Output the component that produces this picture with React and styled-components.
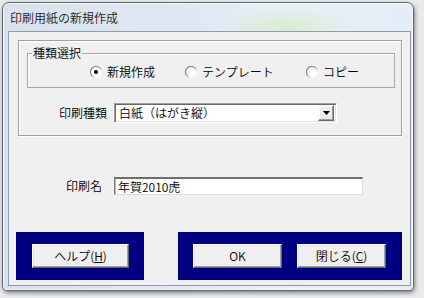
import React, { useId } from 'react';
import styled, { createGlobalStyle } from 'styled-components';

const Global = createGlobalStyle`
  html, body { margin: 0; padding: 0; }
  body {
    background: #e9eaec;
    width: 424px;
    height: 298px;
    overflow: hidden;
    font-family: "Noto Sans CJK JP", "Noto Sans", sans-serif;
    font-size: 12px;
    font-weight: 350;
    color: #000;
  }
`;

const Desktop = styled.div`
  width: 424px;
  height: 298px;
  box-sizing: border-box;
  padding: 2px 0 0 2px;
`;

const Window = styled.div`
  width: 412px;
  height: 289px;
  box-sizing: border-box;
  border: 1px solid #5d6670;
  border-radius: 7px 7px 5px 5px;
  padding: 0 2px 4px 5px;
  display: flex;
  flex-direction: column;
  background:
    radial-gradient(ellipse 70px 22px at 285px 26px, rgba(214, 236, 200, 0.9), rgba(214, 236, 200, 0) 100%),
    linear-gradient(to right, #d8e2ee 0%, #dfe8f2 45%, #e7eff8 70%, #e4edf7 100%);
  box-shadow: inset 0 0 0 1px rgba(255, 255, 255, 0.75), 1px 2px 4px rgba(0, 0, 0, 0.45);
`;

const TitleBar = styled.div`
  height: 28px;
  display: flex;
  align-items: center;
  padding-left: 2px;
  font-size: 12px;
  color: #1a1a1a;
`;

const Client = styled.div`
  flex: 1;
  box-sizing: border-box;
  border: 1px solid #8f9caa;
  background: #f0f0f0;
  padding: 8px 8px 5px 7px;
  display: flex;
  flex-direction: column;
`;

const Panel = styled.div`
  margin-left: 2px;
  width: 384px;
  height: 96px;
  box-sizing: border-box;
  border: 1px solid #a0a0a0;
  box-shadow: inset 1px 1px 0 #fff, 1px 1px 0 #fff;
  padding: 5px 6px 12px 8px;
  display: flex;
  flex-direction: column;
`;

const GroupBox = styled.fieldset`
  margin: 0;
  min-width: 0;
  width: 368px;
  box-sizing: border-box;
  border: 1px solid #a8a8a8;
  box-shadow: inset 1px 1px 0 #fff;
  padding: 4px 0 7px 0;
`;

const Legend = styled.legend`
  margin-left: 4px;
  padding: 0 1px;
  line-height: 14px;
  font-size: 12px;
`;

const RadioRow = styled.div`
  display: flex;
  align-items: center;
  height: 16px;
  padding-left: 62px;
`;

const RadioItem = styled.label`
  display: flex;
  align-items: center;
  gap: 5px;
  width: ${p => p.$w}px;
  line-height: 16px;
  white-space: nowrap;
`;

const FieldRow = styled.div`
  display: flex;
  align-items: center;
  margin-top: ${p => p.$mt}px;
`;

const FieldLabel = styled.div`
  width: ${p => p.$w}px;
  margin-right: ${p => p.$gap}px;
  text-align: right;
  line-height: 16px;
  white-space: nowrap;
`;

const Combo = styled.div`
  width: 223px;
  height: 20px;
  box-sizing: border-box;
  border-top: 1px solid #a0a0a0;
  border-left: 1px solid #a0a0a0;
  border-right: 1px solid #fff;
  border-bottom: 1px solid #fff;
  box-shadow: inset 1px 1px 0 #696969, inset -1px -1px 0 #e3e3e3;
  background: #fff;
  display: flex;
  align-items: center;
  padding: 1px 2px 1px 1px;
`;

const ComboText = styled.div`
  flex: 1;
  padding-left: 3px;
  line-height: 16px;
  white-space: nowrap;
`;

const DropButton = styled.div`
  width: 16px;
  height: 16px;
  box-sizing: border-box;
  background: #ececec;
  border-top: 1px solid #f4f4f4;
  border-left: 1px solid #f4f4f4;
  border-right: 1px solid #6a6a6a;
  border-bottom: 1px solid #6a6a6a;
  box-shadow: inset -1px -1px 0 #a0a0a0, inset 1px 1px 0 #fff;
  display: flex;
  align-items: center;
  justify-content: center;
`;

const TextBox = styled.div`
  width: 249px;
  height: 18px;
  box-sizing: border-box;
  border-top: 2px solid #6e6e6e;
  border-left: 1px solid #7a7a7a;
  border-right: 1px solid #dcdcdc;
  border-bottom: 1px solid #dcdcdc;
  box-shadow: inset 1px 0 0 #b8b8b8;
  background: #fff;
  padding-left: 3px;
  display: flex;
  align-items: center;
  line-height: 15px;
  white-space: nowrap;
`;

const Footer = styled.div`
  margin-top: 37px;
  display: flex;
  justify-content: space-between;
`;

const NavyBlock = styled.div`
  background: #000080;
  height: 48px;
  box-sizing: border-box;
  padding: 12px ${p => p.$pr}px 12px ${p => p.$pl}px;
  display: flex;
  gap: 15px;
`;

const Button = styled.button`
  width: ${p => p.$w}px;
  height: 24px;
  box-sizing: border-box;
  margin: 0;
  padding: 0;
  background: #efefef;
  border-top: 1px solid #fff;
  border-left: 1px solid #fff;
  border-right: 1px solid #646464;
  border-bottom: 1px solid #646464;
  box-shadow: inset -1px -1px 0 #a0a0a0, inset 1px 1px 0 #e4e4e4;
  font-family: "Noto Sans CJK JP", "Noto Sans", sans-serif;
  font-size: 12px;
  font-weight: 350;
  color: #000;
  line-height: 16px;
  display: flex;
  align-items: center;
  justify-content: center;
`;

const Key = styled.span`
  text-decoration: underline;
  text-underline-offset: 1px;
`;

function Radio({ checked }) {
  const id = useId().replace(/:/g, '');
  return (
    <svg width="12" height="12" viewBox="0 0 12 12">
      <defs>
        <linearGradient id={`g${id}`} x1="0" y1="0" x2="1" y2="1">
          <stop offset="0" stopColor="#6e6e6e" />
          <stop offset="0.5" stopColor="#9a9a9a" />
          <stop offset="0.7" stopColor="#f4f4f4" />
          <stop offset="1" stopColor="#ffffff" />
        </linearGradient>
      </defs>
      <circle cx="6" cy="6" r="5.5" fill="#fff" stroke={`url(#g${id})`} strokeWidth="1.2" />
      {checked && <circle cx="6" cy="6" r="2" fill="#000" />}
    </svg>
  );
}

function Caret() {
  return (
    <svg width="7" height="4" viewBox="0 0 7 4">
      <path d="M0 0H7L3.5 4Z" fill="#000" />
    </svg>
  );
}

export default function App() {
  return (
    <>
      <Global />
      <Desktop>
        <Window>
          <TitleBar>印刷用紙の新規作成</TitleBar>
          <Client>
            <Panel>
              <GroupBox>
                <Legend>種類選択</Legend>
                <RadioRow>
                  <RadioItem $w={95}><Radio checked />新規作成</RadioItem>
                  <RadioItem $w={121}><Radio />テンプレート</RadioItem>
                  <RadioItem $w={70}><Radio />コピー</RadioItem>
                </RadioRow>
              </GroupBox>
              <FieldRow $mt={15}>
                <FieldLabel $w={80} $gap={7}>印刷種類</FieldLabel>
                <Combo>
                  <ComboText>白紙（はがき縦）</ComboText>
                  <DropButton><Caret /></DropButton>
                </Combo>
              </FieldRow>
            </Panel>
            <FieldRow $mt={41}>
              <FieldLabel $w={86} $gap={12}>印刷名</FieldLabel>
              <TextBox>年賀2010虎</TextBox>
            </FieldRow>
            <Footer>
              <NavyBlock $pl={16} $pr={15}>
                <Button $w={97}>ヘルプ(<Key>H</Key>)</Button>
              </NavyBlock>
              <NavyBlock $pl={15} $pr={16}>
                <Button $w={89}>OK</Button>
                <Button $w={89}>閉じる(<Key>C</Key>)</Button>
              </NavyBlock>
            </Footer>
          </Client>
        </Window>
      </Desktop>
    </>
  );
}
